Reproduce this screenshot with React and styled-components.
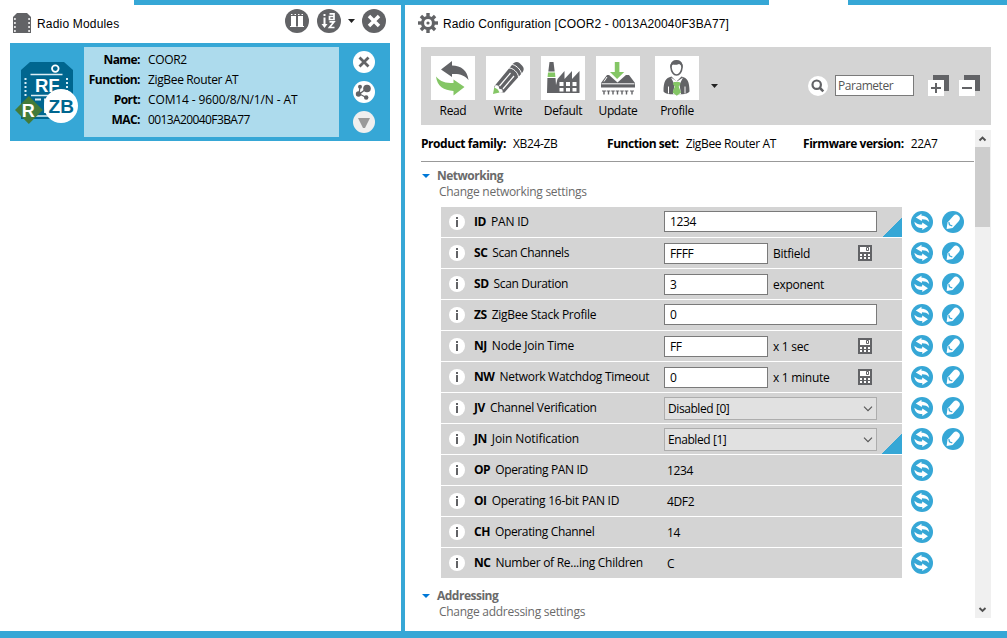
import React from 'react';
import styled, { createGlobalStyle } from 'styled-components';

const BLUE = '#36a7d6';
const DARK = '#626366';
const GREEN = '#84c665';
const PANEL = '#d4d4d4';

const Global = createGlobalStyle`
  * { box-sizing: border-box; }
  body { margin: 0; background: #fff; overflow: hidden; }
`;

const Window = styled.div`
  width: 1007px;
  height: 638px;
  display: grid;
  grid-template-rows: 5px 626px 7px;
  background: #fff;
  color: #000;
  font: 12px/16px 'Open Sans', 'Noto Sans', sans-serif;
  letter-spacing: -0.35px;
  white-space: nowrap;
`;
const TopBar = styled.div`
  display: grid;
  grid-template-columns: 134px 635px 79px 159px;
`;
const BarPart = styled.div`
  background: ${p => (p.$on ? BLUE : '#fff')};
`;
const BottomBar = styled.div`
  background: ${BLUE};
`;
const Body = styled.div`
  display: grid;
  grid-template-columns: 401px 4px 602px;
  grid-template-rows: 626px;
`;
const Divider = styled.div`
  background: ${BLUE};
`;
const Modules = styled.section`
  padding: 0 11px 0 10px;
`;
const PaneHead = styled.header`
  height: 38px;
  display: flex;
  align-items: flex-start;
`;
const PaneTitle = styled.h1`
  margin: ${p => p.$m};
  font: 12px/16px 'Liberation Sans', Arial, sans-serif;
  letter-spacing: ${p => p.$ls};
`;
const HeadTools = styled.div`
  display: flex;
  margin: 4px 4px 0 auto;
  align-items: center;
`;
const Svg = styled.svg`
  display: block;
  flex: none;
  margin: ${p => p.$m || 0};
`;
const Card = styled.article`
  width: 380px;
  height: 98px;
  background: ${BLUE};
  display: grid;
  grid-template-columns: 74px 255px 51px;
`;
const CardInfo = styled.dl`
  margin: 4px 0;
  padding: 3px 0 0;
  background: #addbed;
  display: grid;
  grid-template-columns: 56px 1fr;
  column-gap: 8px;
  grid-auto-rows: 20px;
  line-height: 20px;
`;
const Term = styled.dt`
  font-weight: 700;
  text-align: right;
  letter-spacing: -0.55px;
`;
const Value = styled.dd`
  margin: 0;
  letter-spacing: ${p => p.$ls || '-0.35px'};
`;
const CardButtons = styled.div`
  display: flex;
  flex-direction: column;
  gap: 8px;
  padding: 8px 0 0 14px;
`;

const Config = styled.section`
  padding-left: 16px;
  min-width: 0;
`;
const ConfigHead = styled.header`
  height: 42px;
  display: flex;
  margin-left: -3px;
`;
const Toolbar = styled.div`
  width: 570px;
  height: 78px;
  background: ${PANEL};
  display: flex;
  padding: 9px 0 0 10px;
`;
const Tool = styled.button`
  border: 0;
  padding: 0;
  background: none;
  width: 44px;
  margin-right: ${p => p.$gap || 11}px;
  display: flex;
  flex-direction: column;
  align-items: center;
  font: inherit;
  color: #000;
  letter-spacing: -0.35px;
`;
const Tile = styled.span`
  width: 44px;
  height: 44px;
  background: #fff;
  margin-bottom: 3px;
`;
const Search = styled.div`
  display: flex;
  margin: 19px 11px 0 auto;
`;
const SearchField = styled.div`
  width: 79px;
  height: 21px;
  margin: 0 14px 0 7px;
  border: 1px solid #7a7a7a;
  background: #fff;
  color: #555;
  padding: 2px 0 0 2px;
  letter-spacing: -0.45px;
`;
const ConfigBody = styled.div`
  display: grid;
  grid-template-columns: 554px 16px;
  margin-top: 5px;
  height: 488px;
`;
const Params = styled.div`
  min-width: 0;
`;
const Summary = styled.div`
  height: 32px;
  width: 553px;
  border-bottom: 1px solid #999;
  display: grid;
  grid-template-columns: 186px 196px 1fr;
  padding-top: 6px;
`;
const Pair = styled.div`
  display: flex;
  gap: 7px;
`;
const Strong = styled.b`
  letter-spacing: -0.45px;
`;
const Plain = styled.span`
  letter-spacing: ${p => p.$ls || '-0.35px'};
`;
const Section = styled.div`
  display: grid;
  grid-template-columns: 16px 1fr;
  padding-top: ${p => p.$top}px;
  height: ${p => p.$h}px;
  color: #6a6a6a;
  align-content: start;
`;
const SectionTitle = styled.b`
  letter-spacing: -0.5px;
`;
const SectionNote = styled.div`
  grid-column: 2;
  padding-left: 2px;
  letter-spacing: -0.28px;
`;
const Rows = styled.div`
  display: flex;
  flex-direction: column;
  gap: 1px;
  padding-left: 20px;
`;
const Row = styled.div`
  height: 30px;
  display: grid;
  grid-template-columns: 461px 31px 31px;
`;
const RowPanel = styled.div`
  background: ${p => (p.$changed
    ? `linear-gradient(135deg, ${PANEL} 50%, ${BLUE} 50%) right bottom / 20px 20px no-repeat, ${PANEL}`
    : PANEL)};
  display: grid;
  grid-template-columns: 33px 190px 1fr;
`;
const Label = styled.div`
  padding-top: 7px;
  display: flex;
  gap: 5px;
`;
const Field = styled.div`
  display: flex;
  align-items: flex-start;
`;
const Input = styled.div`
  width: ${p => (p.$wide ? 213 : 104)}px;
  height: 21px;
  margin-top: ${p => (p.$wide ? 4 : 5)}px;
  border: 1px solid #7a7a7a;
  background: #fff;
  padding: 2px 0 0 5px;
`;
const Select = styled.div`
  width: 213px;
  height: 23px;
  margin-top: 4px;
  border: 1px solid #adadad;
  background: #e1e1e1;
  display: flex;
  justify-content: space-between;
  padding: 3px 3px 0 3px;
  letter-spacing: -0.42px;
`;
const Unit = styled.div`
  width: 90px;
  flex: none;
  padding: 8px 0 0 5px;
  letter-spacing: -0.28px;
`;
const ReadOnly = styled.div`
  padding: 8px 0 0 3px;
`;
const ScrollBar = styled.div`
  background: #f0f0f0;
  display: flex;
  flex-direction: column;
`;
const Thumb = styled.div`
  height: 80px;
  width: 15px;
  background: #cdcdcd;
  margin-bottom: auto;
`;

const ChipIcon = () => (
  <Svg width="20" height="22" viewBox="0 0 20 22" $m="7px 0 0 2px">
    <path d="M5 1h10l4 4v16H1V5z" fill={DARK} />
    <g fill="#fff">
      {[7, 11, 15, 19].map(y => <React.Fragment key={y}><rect x="2" y={y - .8} width="1.800" height="1.600" /><rect x="16.200" y={y - .8} width="1.800" height="1.600" /></React.Fragment>)}
    </g>
  </Svg>
);
const DiscoverIcon = () => (
  <Svg width="24" height="24" viewBox="0 0 24 24">
    <circle cx="12" cy="12" r="12" fill={DARK} />
    <path d="M6 7h5v10H6zM13 7h5v10h-5z" fill="#fff" />
    <path d="M5 17.500h6.500M12.500 17.500H19M6 5.500h1.500M9.500 5.500H11M13 5.500h1.500M16.500 5.500H18" stroke="#fff" />
  </Svg>
);
const SortIcon = () => (
  <Svg width="24" height="24" viewBox="0 0 24 24" $m="0 0 0 8px">
    <circle cx="12" cy="12" r="12" fill={DARK} />
    <path d="M7.500 5v2M7.500 8.500v8" stroke="#fff" strokeWidth="2" />
    <path d="M4.500 15h6l-3 4z" fill="#fff" />
    <path d="M12.500 4.800h4.500v5.700h-4.500v-3h4.500M12.500 12.800h4.500l-4.500 5.700h5" fill="none" stroke="#fff" strokeWidth="1.700" />
  </Svg>
);
const Caret = ({ m }) => (
  <Svg width="7" height="4" viewBox="0 0 7 4" $m={m}><path d="M0 0h7L3.500 4z" fill="#222" /></Svg>
);
const CloseIcon = () => (
  <Svg width="24" height="24" viewBox="0 0 24 24">
    <circle cx="12" cy="12" r="12" fill={DARK} />
    <path d="M7 7l10 10M17 7L7 17" stroke="#fff" strokeWidth="3.500" />
  </Svg>
);
const ModuleIcon = () => (
  <Svg width="74" height="98" viewBox="10 43 74 98">
    <path d="M30 62h34l9 8v41l-9 8H21V70z" fill="#00668f" />
    <circle cx="55.300" cy="68.600" r="3.300" fill="none" stroke="#fff" strokeWidth="1.800" />
    <path d="M30.500 74.500h32M31 95.500h30M34 116h15" stroke="#dceef5" strokeWidth="1.600" />
    <g fill="#d6edf6">
      {[78, 82, 86, 90, 94].map(y => <React.Fragment key={y}><rect x="24.500" y={y} width="2" height="2" /><rect x="66" y={y} width="2" height="2" /></React.Fragment>)}
    </g>
    <text x="35" y="91.500" fontSize="18.500" fontWeight="700" fontFamily="Liberation Sans" fill="#fff" letterSpacing="0" textLength="24.500">RF</text>
    <path d="M35 99.500h6M44 99.500h7M45 99v13M45 105.500h5M44 112h5" stroke="#dceef5" strokeWidth="1.800" />
    <path d="M28.800 96l14 14-14 14L15 110z" fill="#437b39" />
    <text x="21.700" y="116.500" fontSize="18" fontWeight="700" fontFamily="Liberation Sans" letterSpacing="0" fill="#fff">R</text>
    <circle cx="61" cy="106" r="17" fill="#fff" />
    <text x="48.500" y="113" fontSize="19" fontWeight="700" fontFamily="Liberation Sans" fill="#00668f" letterSpacing="0" textLength="25.500">ZB</text>
  </Svg>
);
const RoundIcon = ({ fill = '#fff', children }) => (
  <Svg width="22" height="22" viewBox="0 0 22 22"><circle cx="11" cy="11" r="11" fill={fill} />{children}</Svg>
);
const GearIcon = () => (
  <Svg width="20" height="20" viewBox="-10 -10 20 20" $m="8px 0 0">
    <g fill={DARK}>{[0, 45, 90, 135, 180, 225, 270, 315].map(a => <rect key={a} x="-1.700" y="-10" width="3.400" height="5" transform={`rotate(${a})`} />)}</g>
    <circle r="5.500" fill="none" stroke={DARK} strokeWidth="3.200" />
    <circle r="1.600" fill={DARK} />
  </Svg>
);
const TileSvg = ({ children }) => <Tile><Svg width="44" height="44" viewBox="0 0 44 44">{children}</Svg></Tile>;
const ReadIcon = () => (
  <TileSvg>
    <path d="M10 13.500L21 5v4.500c9 0 15.500 5 16.500 14.500-4-5-9-6.500-16.500-6V21z" fill={DARK} />
    <path d="M33.500 31L22.500 39.500V35C13 34.500 6 30 5 20.500c4.500 5.500 9.500 6.500 17.500 6.500V23.500z" fill={GREEN} />
  </TileSvg>
);
const WriteIcon = () => (
  <TileSvg>
    <path d="M8.500 30L25.500 9.500c2-3 5-4.500 8-2.500l2.500 2.500c2.500 2.500 2 5 0 7.500L18.500 36.500l-10 .5z" fill={DARK} />
    <path d="M25.500 8.500c3-.5 10 5 10 10M22.500 12c4-.5 10 4.500 10 9.500" stroke="#fff" strokeWidth="1" fill="none" />
    <path d="M24.500 17L13.500 30M28 20L17 33" stroke="#fff" strokeWidth="1.200" />
    <path d="M9.500 29l3 .8.8 3 3 .7.500 3-6 1-3-3z" fill="#fff" />
    <path d="M8.200 31.500c2 .5 4.500 2.500 5.300 5L7 38z" fill={GREEN} />
  </TileSvg>
);
const DefaultIcon = () => (
  <TileSvg>
    <path d="M8.500 6h4l1.200 9.500H7.300z" fill={DARK} />
    <path d="M7 16.500h7l.4 4.500H6.600z" fill={GREEN} />
    <path d="M6.400 22h8.100l.5 7 1.500-6 7-8v8l7.500-8v8l7.500-8V37H6z" fill={DARK} />
    <path d="M18.500 26h4v4h-4zM25 26h4v4h-4zM31.500 26h4v4h-4zM18.500 32h4v3.500h-4zM25 32h4v3.500h-4zM31.500 32h4v3.500h-4z" fill="#fff" />
  </TileSvg>
);
const UpdateIcon = () => (
  <TileSvg>
    <path d="M11 19h22l6 8v4.500H5V27z" fill={DARK} />
    <path d="M12.500 18.500h18L21.500 26.500z" fill="#fff" />
    <path d="M8 25.500l3-4.500" stroke="#fff" />
    <path d="M5.500 27.800h33" stroke="#fff" />
    <path d="M18.800 6h4.600v10h4.800l-7.100 7-7.100-7h4.800z" fill={GREEN} />
    <path d="M8 35v3.500M12.500 35v3.500M17 35v3.500M21.500 35v3.500M26 35v3.500M30.500 35v3.500M36 35v3.500" stroke={DARK} strokeWidth="1.400" />
    <path d="M6 35h4M10.700 35h3.600M15.200 35h3.600M19.700 35h3.600M24.200 35h3.600M28.700 35h3.600M34 35h4" stroke={DARK} />
  </TileSvg>
);
const ProfileIcon = () => (
  <TileSvg>
    <path d="M21.500 5c3.800 0 5.800 3 5.500 6.500-.3 4-2.500 7.500-5.500 7.500S16.300 15.500 16 11.500C15.700 8 17.700 5 21.500 5z" fill="#fff" stroke={DARK} strokeWidth="1.600" />
    <path d="M15.500 12c-.5-5 2-8 6-8s6.800 3 6 8c-1-2-2-3.500-3.500-4-2.500 1-5 1-6 .5-1.200.8-2 2-2.500 3.500z" fill={DARK} />
    <path d="M16.500 20.500l5 5 5-5c6 1.500 8 5 8 15-1.500 2-4 2.700-7 2.700h-12c-3 0-5.500-.7-7-2.700 0-10 2-13.500 8-15z" fill={DARK} />
    <path d="M16 21.500l3.500 7-1.500 9.700h8l-1.500-9.700 3.500-7-6 4z" fill="#fff" />
    <path d="M19 26h5.500l1 2-1.800 2.500 2.300 6-4.200 3.200-4.200-3.200 2.200-6-2-2.500z" fill={GREEN} />
    <path d="M13.500 30.500v7M30 30.500v7" stroke="#fff" />
  </TileSvg>
);
const SearchIcon = () => (
  <Svg width="20" height="20" viewBox="0 0 20 20" $m="1px 0 0">
    <circle cx="10" cy="10" r="10" fill="#fff" />
    <circle cx="8.700" cy="8.700" r="4.200" fill="none" stroke={DARK} strokeWidth="2.200" />
    <path d="M11.500 11.500l3.800 3.800" stroke={DARK} strokeWidth="2.500" />
  </Svg>
);
const StackIcon = ({ plus, m }) => (
  <Svg width="21" height="21" viewBox="0 0 21 21" $m={m}>
    <path d="M5 0h16v16H5z" fill={DARK} />
    <path d="M0 5h16v16H0z" fill="#fff" />
    <path d={plus ? 'M3 13h10M8 8v10' : 'M3 13h10'} stroke={DARK} strokeWidth="2" />
  </Svg>
);
const SectionCaret = () => (
  <Svg width="8" height="4" viewBox="0 0 8 4" $m="6px 0 0 1px"><path d="M0 0h8L4 4z" fill="#0078d7" /></Svg>
);
const InfoIcon = () => (
  <Svg width="16" height="16" viewBox="0 0 16 16" $m="7px 0 0 8px">
    <circle cx="8" cy="8" r="8" fill="#fff" />
    <path d="M7 3h2v2H7zM7 6h2v7H7z" fill={DARK} />
  </Svg>
);
const CalcIcon = () => (
  <Svg width="14" height="16" viewBox="0 0 14 16" $m="7px 0 0">
    <path d="M0 0h14v16H0z" fill={DARK} />
    <path d="M2 2h10v5H2zM2 9h2v2H2zM6 9h2v2H6zM10 9h2v2h-2zM2 12h2v2H2zM6 12h2v2H6zM10 12h2v2h-2z" fill="#fff" />
    <path d="M8.500 2.500h2v3h-2z" fill="#fff" stroke={DARK} />
  </Svg>
);
const RefreshIcon = () => (
  <Svg width="22" height="22" viewBox="0 0 22 22" $m="4px 0 0 9px">
    <circle cx="11" cy="11" r="11" fill={BLUE} />
    <path d="M4.800 6.500L10.500 2.800v1.900c4.500 0 7.300 2.300 7.700 6.300-2-2-4-2.700-7.200-2.700L10.800 10z" fill="#fff" />
    <path d="M17 15.300l-5.700 3.800v-2C6.500 17 3.800 14.700 3.400 10.700c2 2 4.500 2.900 7.600 2.900l.3-2z" fill="#fff" />
  </Svg>
);
const PencilIcon = () => (
  <Svg width="22" height="22" viewBox="0 0 22 22" $m="4px 0 0 9px">
    <circle cx="11" cy="11" r="11" fill={BLUE} />
    <path d="M5.500 11.500L11.500 4.800c1.400-1.500 3.200-1.600 4.600-.4l1 1c1.200 1.300 1 3-.2 4.500l-6.300 7L4.600 18z" fill="#fff" />
    <path d="M6.800 11.200l.7 2.600 2.800 1.200" fill="none" stroke={BLUE} strokeWidth="1.300" />
  </Svg>
);
const Chevron = () => (
  <Svg width="10" height="6" viewBox="0 0 10 6" $m="5px 0 0"><path d="M1 .7l4 4 4-4" fill="none" stroke="#555" strokeWidth="1.100" /></Svg>
);
const ScrollArrow = ({ down }) => (
  <Svg width="15" height="17" viewBox="0 0 15 17">
    <path d={down ? 'M4.500 7l3 3 3-3' : 'M4.500 10.500l3-3 3 3'} fill="none" stroke="#505050" strokeWidth="1.900" />
  </Svg>
);

const tools = [
  ['Read', ReadIcon], ['Write', WriteIcon], ['Default', DefaultIcon], ['Update', UpdateIcon, 15], ['Profile', ProfileIcon, 12],
];
const rows = [
  { code: 'ID', name: 'PAN ID', text: '1234', wide: true, changed: true, ls: '-0.2px' },
  { code: 'SC', name: 'Scan Channels', text: 'FFFF', unit: 'Bitfield', calc: true },
  { code: 'SD', name: 'Scan Duration', text: '3', unit: 'exponent' },
  { code: 'ZS', name: 'ZigBee Stack Profile', text: '0', wide: true, ls: '-0.25px' },
  { code: 'NJ', name: 'Node Join Time', text: 'FF', unit: 'x 1 sec', calc: true, ls: '-0.2px' },
  { code: 'NW', name: 'Network Watchdog Timeout', text: '0', unit: 'x 1 minute', calc: true, ls: '-0.28px' },
  { code: 'JV', name: 'Channel Verification', option: 'Disabled [0]', ls: '-0.28px' },
  { code: 'JN', name: 'Join Notification', option: 'Enabled [1]', changed: true, ls: '-0.1px' },
  { code: 'OP', name: 'Operating PAN ID', value: '1234' },
  { code: 'OI', name: 'Operating 16-bit PAN ID', value: '4DF2', ls: '-0.27px' },
  { code: 'CH', name: 'Operating Channel', value: '14' },
  { code: 'NC', name: 'Number of Re...ing Children', value: 'C', ls: '-0.28px' },
];

const ParamRow = ({ r }) => (
  <Row>
    <RowPanel $changed={r.changed}>
      <InfoIcon />
      <Label><Strong>{r.code}</Strong><Plain $ls={r.ls}>{r.name}</Plain></Label>
      <Field>
        {r.text && <Input $wide={r.wide}>{r.text}</Input>}
        {r.unit && <Unit>{r.unit}</Unit>}
        {r.calc && <CalcIcon />}
        {r.option && <Select>{r.option}<Chevron /></Select>}
        {r.value && <ReadOnly>{r.value}</ReadOnly>}
      </Field>
    </RowPanel>
    <RefreshIcon />
    {!r.value && <PencilIcon />}
  </Row>
);

export default function App() {
  return (
    <Window>
      <Global />
      <TopBar><BarPart /><BarPart $on /><BarPart /><BarPart $on /></TopBar>
      <Body>
        <Modules>
          <PaneHead>
            <ChipIcon />
            <PaneTitle $m="11px 0 0 5px" $ls="0.18px">Radio Modules</PaneTitle>
            <HeadTools><DiscoverIcon /><SortIcon /><Caret m="0 7px 0 7px" /><CloseIcon /></HeadTools>
          </PaneHead>
          <Card>
            <ModuleIcon />
            <CardInfo>
              <Term>Name:</Term><Value>COOR2</Value>
              <Term>Function:</Term><Value>ZigBee Router AT</Value>
              <Term>Port:</Term><Value $ls="-0.13px">COM14 - 9600/8/N/1/N - AT</Value>
              <Term>MAC:</Term><Value $ls="-0.6px">0013A20040F3BA77</Value>
            </CardInfo>
            <CardButtons>
              <RoundIcon><path d="M6.500 6.500l9 9M15.500 6.500l-9 9" stroke={DARK} strokeWidth="2.800" /></RoundIcon>
              <RoundIcon>
                <circle cx="14" cy="7.500" r="3.800" fill={DARK} /><circle cx="7" cy="5.800" r="2" fill={DARK} />
                <circle cx="5.500" cy="13" r="2.700" fill={DARK} /><circle cx="13.200" cy="16.500" r="2.200" fill={DARK} />
                <path d="M13 8l-6.500 5 6.700 3.500M7 6l-1 7" fill="none" stroke={DARK} strokeWidth="1.300" />
              </RoundIcon>
              <RoundIcon fill="#efefef"><path d="M5 7h12l-5 10h-2z" fill="#999" /></RoundIcon>
            </CardButtons>
          </Card>
        </Modules>
        <Divider />
        <Config>
          <ConfigHead>
            <GearIcon />
            <PaneTitle $m="11px 0 0 5px" $ls="0.11px">Radio Configuration [COOR2 - 0013A20040F3BA77]</PaneTitle>
          </ConfigHead>
          <Toolbar>
            {tools.map(([name, Icon, gap]) => <Tool key={name} $gap={gap}><Icon />{name}</Tool>)}
            <Caret m="28px 0 0" />
            <Search>
              <SearchIcon />
              <SearchField>Parameter</SearchField>
              <StackIcon plus />
              <StackIcon m="0 0 0 10px" />
            </Search>
          </Toolbar>
          <ConfigBody>
            <Params>
              <Summary>
                <Pair><Strong>Product family:</Strong><Plain>XB24-ZB</Plain></Pair>
                <Pair><Strong>Function set:</Strong><Plain>ZigBee Router AT</Plain></Pair>
                <Pair><Strong>Firmware version:</Strong><Plain>22A7</Plain></Pair>
              </Summary>
              <Section $top={6} $h={45}>
                <SectionCaret /><SectionTitle>Networking</SectionTitle>
                <SectionNote>Change networking settings</SectionNote>
              </Section>
              <Rows>{rows.map(r => <ParamRow key={r.code} r={r} />)}</Rows>
              <Section $top={10} $h={40}>
                <SectionCaret /><SectionTitle>Addressing</SectionTitle>
                <SectionNote>Change addressing settings</SectionNote>
              </Section>
            </Params>
            <ScrollBar><ScrollArrow /><Thumb /><ScrollArrow down /></ScrollBar>
          </ConfigBody>
        </Config>
      </Body>
      <BottomBar />
    </Window>
  );
}
